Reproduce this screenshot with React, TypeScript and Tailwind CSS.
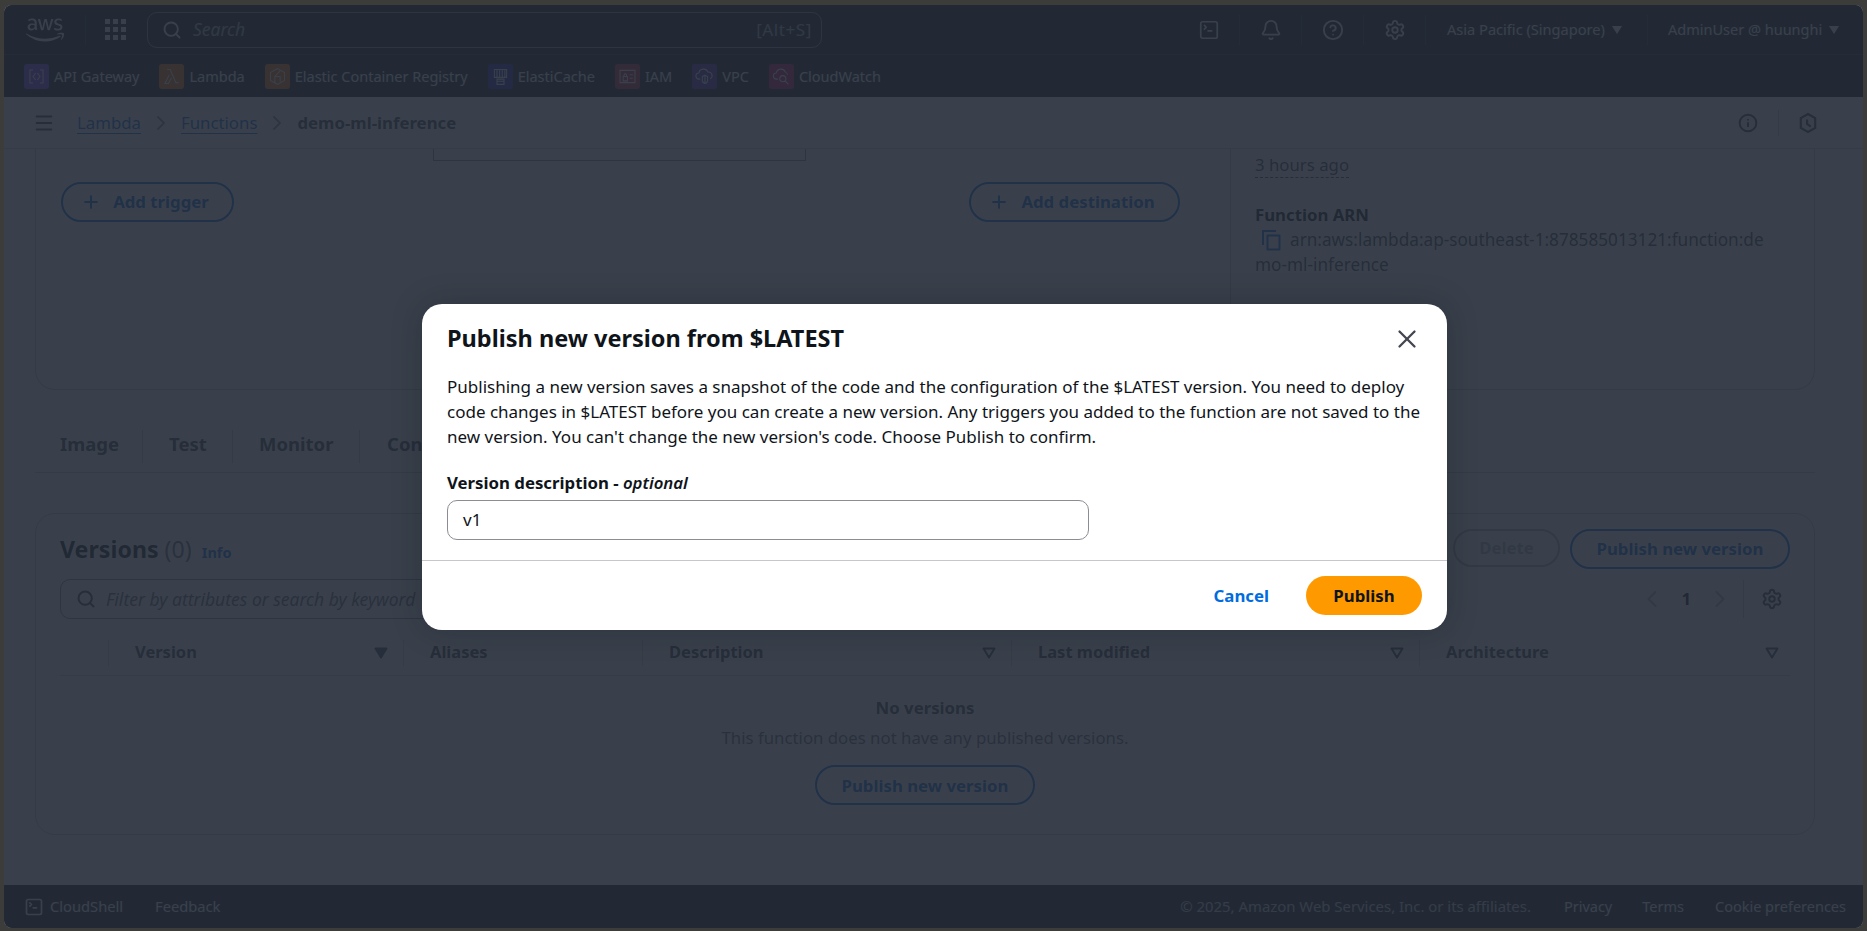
import React from 'react';
import { Bell, ChevronLeft, ChevronRight, CircleHelp, Info, Menu, Plus, Search, Settings, SquareTerminal, X } from 'lucide-react';
import { FaAws } from 'react-icons/fa';

const favorites = [
  {
    name: 'API Gateway',
    color: 'bg-[#7a3dfa]',
    glyph: <path d="M8 4.5H4.5v15H8M16 4.5h3.5v15H16M11 8l-3 4 3 4M13 8l3 4-3 4" />,
  },
  {
    name: 'Lambda',
    color: 'bg-[#ed7100]',
    glyph: <path d="M7 4h3.5L17 19h3M9.5 10 4.5 20h4l3.5-6.5" />,
  },
  {
    name: 'Elastic Container Registry',
    color: 'bg-[#ed7100]',
    glyph: <path d="M12 3l8 4.5v9L12 21l-8-4.5v-9zM9 19.5V12l6-6.5M15 18v-6l-6 0" />,
  },
  {
    name: 'ElastiCache',
    color: 'bg-[#2e27ad]',
    glyph: <path d="M5 4h14v9H5zM8 4v9M11 4v9M14 4v9M17 4v9M8 15h8v2.5H8zM8 17.5h8V21H8z" />,
  },
  {
    name: 'IAM',
    color: 'bg-[#c7293f]',
    glyph: <path d="M3.5 5h17v14h-17zM7 12h5v5H7zM8 12v-1.5a1.5 1.5 0 0 1 3 0V12M14.5 10h3.5M14.5 14h3.5" />,
  },
  {
    name: 'VPC',
    color: 'bg-[#5a30b5]',
    glyph: <path d="M7 15H6a3.5 3.5 0 0 1-.5-7 5.5 5.5 0 0 1 10.5-1 4 4 0 0 1 2.5 7.5M9.5 12l3-1.5 3 1.5v4.5c0 2-1.5 3-3 3.5-1.5-.5-3-1.5-3-3.5zM12.5 11v8" />,
  },
  {
    name: 'CloudWatch',
    color: 'bg-[#c7136a]',
    glyph: <path d="M8 15H6.5a3.5 3.5 0 0 1-.5-7 5.5 5.5 0 0 1 10.5-1 4 4 0 0 1 2.5 3M13.5 11a3.5 3.5 0 1 0 0 7 3.5 3.5 0 0 0 0-7zM16 17l4 4" />,
  },
];

const Caret = ({ className = '' }: { className?: string }) => (
  <svg viewBox="0 0 12 10" className={`w-[12px] h-[10px] fill-current ${className}`}>
    <path d="M1 1h10L6 9z" />
  </svg>
);

const SortIcon = ({ filled }: { filled?: boolean }) => (
  <svg viewBox="0 0 14 12" className="w-[14px] h-[12px]">
    <path d="M1.5 1.5h11L7 10.5z" fill={filled ? '#414d5c' : 'none'} stroke="#414d5c" strokeWidth="2" strokeLinejoin="round" />
  </svg>
);

const GridIcon = () => (
  <svg viewBox="0 0 21 21" className="w-[21px] h-[21px] fill-current">
    {[0, 8, 16].map((y) => [0, 8, 16].map((x) => <rect key={`${x}-${y}`} x={x} y={y} width="5" height="5" />))}
  </svg>
);

const Pill = ({ children, className = '' }: { children: React.ReactNode; className?: string }) => (
  <button className={`h-[40px] flex items-center justify-center rounded-full border-[2.5px] border-[#006ce0] text-[#006ce0] text-[16.8px] font-bold ${className}`}>
    {children}
  </button>
);

const Service = ({ item }: { item: (typeof favorites)[number] }) => (
  <div className="flex items-center gap-[5px]">
    <div className={`${item.color} w-[25px] h-[25px] rounded-[3px] flex items-center justify-center`}>
      <svg viewBox="0 0 24 24" className="w-[21px] h-[21px]" fill="none" stroke="white" strokeWidth="1.2">
        {item.glyph}
      </svg>
    </div>
    <span className="text-[14.5px] text-white whitespace-nowrap">{item.name}</span>
  </div>
);

const columns = [
  { label: 'Version', w: 'w-[295px]', filled: true },
  { label: 'Aliases', w: 'w-[239px]', none: true },
  { label: 'Description', w: 'w-[369px]' },
  { label: 'Last modified', w: 'w-[408px]' },
  { label: 'Architecture', w: 'w-[369px]' },
];

const NavIcon = ({ children }: { children: React.ReactNode }) => (
  <div className="w-[62px] h-[30px] flex items-center justify-center border-r border-[#2a3340]">{children}</div>
);

export default function App() {
  return (
    <div className="w-full h-screen bg-[#3c3c3a] pt-[5px] pl-[4px] pr-[4px] pb-[3px] overflow-hidden" style={{ fontFamily: '"Noto Sans", "Open Sans", sans-serif' }}>
      <div className="relative w-full h-full flex flex-col bg-white rounded-[8px] overflow-hidden text-[#0f141a]">
        {/* top nav */}
        <div className="bg-[#161d26] h-[50px] shrink-0 flex items-center text-white border-b border-[#2a3340]">
          <div className="w-[82px] pl-[22px] flex items-center border-r border-[#2a3340] h-[30px]">
            <FaAws className="w-[38px] h-[36px]" />
          </div>
          <div className="ml-[19px] w-[21px]"><GridIcon /></div>
          <div className="ml-[21px] w-[675px] h-[36px] rounded-[10px] border border-[#8c8c94] flex items-center pl-[14px] pr-[9px]">
            <Search className="w-[20px] h-[20px]" strokeWidth={2.2} />
            <span className="ml-[11px] italic text-[17.5px] text-[#b0b5bd]">Search</span>
            <span className="ml-auto text-[17px] tracking-[0.6px] text-[#b0b5bd]">[Alt+S]</span>
          </div>
          <div className="ml-[356px] flex items-center">
            <NavIcon><SquareTerminal className="w-[22px] h-[26px]" strokeWidth={1.8} /></NavIcon>
            <NavIcon><Bell className="w-[22px] h-[24px]" strokeWidth={2} /></NavIcon>
            <NavIcon><CircleHelp className="w-[22px] h-[22px]" strokeWidth={2} /></NavIcon>
            <NavIcon><Settings className="w-[22px] h-[22px]" strokeWidth={2} /></NavIcon>
          </div>
          <div className="w-[222px] h-[30px] pl-[21px] flex items-center gap-[6px] text-[14.6px] border-r border-[#2a3340]">
            <span>Asia Pacific (Singapore)</span>
            <Caret />
          </div>
          <div className="ml-[20px] flex items-center gap-[6px] text-[14.5px]">
            <span>AdminUser @ huunghi</span>
            <Caret />
          </div>
        </div>

        {/* favorites */}
        <div className="bg-[#161d26] h-[42px] shrink-0 flex items-center pl-[20px] pt-[1px] gap-[20px]">
          {favorites.map((f) => (
            <Service key={f.name} item={f} />
          ))}
        </div>

        {/* breadcrumbs */}
        <div className="h-[52px] shrink-0 flex items-center pl-[29px] pr-[46px] border-b border-[#d4d6dc] text-[16.8px]">
          <Menu className="w-[22px] h-[22px] text-[#424650]" strokeWidth={2.2} />
          <a className="ml-[22px] text-[#006ce0] underline underline-offset-4">Lambda</a>
          <ChevronRight className="mx-[8px] w-[24px] h-[24px] text-[#8c8c94]" strokeWidth={1.8} />
          <a className="text-[#006ce0] underline underline-offset-4">Functions</a>
          <ChevronRight className="mx-[8px] w-[24px] h-[24px] text-[#8c8c94]" strokeWidth={1.8} />
          <span className="font-bold text-[#424650]">demo-ml-inference</span>
          <div className="ml-auto flex items-center h-[30px]">
            <Info className="w-[20px] h-[20px] text-[#424650]" strokeWidth={2.4} />
            <div className="ml-[20px] mr-[20px] w-px h-[26px] bg-[#c6c6cd]" />
            <svg viewBox="0 0 20 24" className="w-[18px] h-[22px] text-[#424650]" fill="none" stroke="currentColor" strokeWidth="2.4">
              <path d="M10 2l8 4.5v11L10 22l-8-4.5v-11z" />
              <path d="M9 8v5l4 3" />
            </svg>
          </div>
        </div>

        {/* page */}
        <div className="flex-1 min-h-0 flex flex-col pl-[31px] pr-[48px]">
          <div className="h-[241px] shrink-0 flex border-x border-b border-[#c6c6cd] rounded-b-[20px]">
            <div className="w-[1194px] shrink-0 flex flex-col">
              <div className="ml-[397px] w-[373px] h-[12px] border-x border-b border-[#8c8c94]" />
              <div className="mt-[21px] pl-[25px] pr-[50px] flex justify-between">
                <Pill className="w-[173px] gap-[12px] pr-[5px]"><Plus className="w-[20px] h-[20px]" strokeWidth={2.5} />Add trigger</Pill>
                <Pill className="w-[211px] gap-[12px] pr-[5px]"><Plus className="w-[20px] h-[20px]" strokeWidth={2.5} />Add destination</Pill>
              </div>
            </div>
            <div className="flex-1 border-l border-[#c6c6cd] pl-[24px] text-[16.8px] leading-[25px] text-[#424650]">
              <div className="mt-[4px] inline-block border-b border-dashed border-[#424650] leading-[24px]">3 hours ago</div>
              <div className="mt-[24px] font-bold text-[#0f141a]">Function ARN</div>
              <div className="whitespace-nowrap text-[17.2px]">
                <svg viewBox="0 0 20 22" className="inline-block ml-[6px] mr-[9px] w-[20px] h-[22px] align-[-5px] text-[#006ce0]" fill="none" stroke="currentColor" strokeWidth="2">
                  <path d="M2 16V2h13" />
                  <rect x="6.5" y="6.5" width="12" height="14" />
                </svg>
                arn:aws:lambda:ap-southeast-1:878585013121:function:de
                <br />
                mo-ml-inference
              </div>
            </div>
          </div>

          {/* tabs */}
          <div className="mt-[40px] h-[43px] shrink-0 flex pl-[25px] pb-[9px] border-b border-[#c6c6cd] text-[18.5px] font-bold text-[#424650]">
            <span className="w-[83px] border-r border-[#c6c6cd]">Image</span>
            <span className="w-[90px] pl-[26px] border-r border-[#c6c6cd]">Test</span>
            <span className="w-[127px] pl-[26px] border-r border-[#c6c6cd]">Monitor</span>
            <span className="pl-[27px]">Configuration</span>
          </div>

          {/* versions */}
          <div className="mt-[40px] h-[322px] shrink-0 border border-[#c6c6cd] rounded-[20px] px-[24px] flex flex-col">
            <div className="mt-[16px] h-[38px] flex items-center justify-between">
              <div className="flex items-baseline">
                <span className="text-[23.2px] font-bold">Versions</span>
                <span className="ml-[6px] text-[23.2px] text-[#656871]">(0)</span>
                <span className="ml-[10px] text-[14.5px] font-bold text-[#006ce0]">Info</span>
              </div>
              <div className="flex gap-[10px]">
                <button className="w-[107px] h-[38px] rounded-full border-[2px] border-[#b4b4bb] text-[16.8px] font-bold text-[#b4b4bb]">Delete</button>
                <Pill className="w-[220px] h-[38px]">Publish new version</Pill>
              </div>
            </div>
            <div className="mt-[11px] h-[40px] flex items-center">
              <div className="w-[940px] h-[40px] rounded-[10px] border border-[#8c8c94] flex items-center pl-[15px]">
                <Search className="w-[20px] h-[20px] text-[#424650]" strokeWidth={2.4} />
                <span className="ml-[10px] italic text-[17.5px] text-[#656871]">Filter by attributes or search by keyword</span>
              </div>
              <div className="ml-auto flex items-center text-[#b4b4bb]">
                <ChevronLeft className="w-[28px] h-[28px]" strokeWidth={1.8} />
                <span className="mx-[15px] font-bold text-[#0f141a] text-[16.8px]">1</span>
                <ChevronRight className="w-[28px] h-[28px]" strokeWidth={1.8} />
                <div className="ml-[9px] mr-[17px] w-px h-[38px] bg-[#c6c6cd]" />
                <Settings className="w-[22px] h-[22px] text-[#424650] mr-[7px]" strokeWidth={2.2} />
              </div>
            </div>
            <div className="mt-[16px] h-[41px] flex pb-[5px] border-b border-[#d4d6dc] text-[16.5px] font-bold text-[#424650] items-center">
              <div className="w-[49px] h-[26px] border-r border-[#d4d6dc] shrink-0" />
              {columns.map((c) => (
                <div key={c.label} className={`${c.w} h-[26px] shrink-0 flex items-center justify-between pl-[26px] pr-[15px] border-r border-[#d4d6dc] last:border-r-0 last:w-[370px] last:pr-[11px]`}>
                  <span>{c.label}</span>
                  {!c.none && <SortIcon filled={c.filled} />}
                </div>
              ))}
            </div>
            <div className="flex flex-col items-center mt-[19px] text-[16.8px] leading-[25px]">
              <div className="font-bold text-[#424650]">No versions</div>
              <div className="mt-[5px] text-[#656871]">This function does not have any published versions.</div>
              <Pill className="mt-[15px] w-[220px]">Publish new version</Pill>
            </div>
          </div>
        </div>

        {/* footer */}
        <div className="bg-[#161d26] h-[43px] shrink-0 flex items-center pl-[20px] pr-[17px] text-white text-[14.5px]">
          <SquareTerminal className="w-[20px] h-[24px]" strokeWidth={2} />
          <span className="ml-[6px] text-[14.7px]">CloudShell</span>
          <span className="ml-[32px] text-[14.7px]">Feedback</span>
          <span className="ml-auto text-[14.9px] text-[#d1d5db]">© 2025, Amazon Web Services, Inc. or its affiliates.</span>
          <span className="ml-[33px]">Privacy</span>
          <span className="ml-[30px]">Terms</span>
          <span className="ml-[31px]">Cookie preferences</span>
        </div>

        {/* overlay + modal */}
        <div className="absolute inset-0 bg-[#232b37]/90 z-10" />
        <div className="absolute z-20 left-[418px] top-[299px] w-[1025px] h-[326px] bg-white rounded-[20px] shadow-[0_0_30px_rgba(15,20,26,0.25)] flex flex-col">
          <div className="flex-1 px-[25px] pt-[18px]">
            <div className="flex items-center justify-between">
              <h2 className="text-[23.5px] leading-[33px] font-bold text-[#0f141a]">Publish new version from $LATEST</h2>
              <X className="w-[30px] h-[30px] text-[#424650]" strokeWidth={1.8} />
            </div>
            <p className="mt-[19px] text-[17px] leading-[25px] text-[#0f141a]">
              Publishing a new version saves a snapshot of the code and the configuration of the $LATEST version. You need to deploy code changes in $LATEST before you can create a new version. Any triggers you added to the function are not saved to the new version. You can't change the new version's code. Choose Publish to confirm.
            </p>
            <div className="mt-[21px] text-[16.8px] leading-[25px] font-bold">Version description - <i className="font-semibold">optional</i></div>
            <div className="mt-[5px] w-[642px] h-[40px] rounded-[10px] border border-[#8c8c94] flex items-center pl-[15px] text-[17px]">v1</div>
          </div>
          <div className="h-[70px] border-t border-[#c6c6cd] flex items-center justify-end pr-[25px]">
            <button className="text-[16.8px] font-bold text-[#006ce0]">Cancel</button>
            <button className="ml-[37px] w-[116px] h-[39px] rounded-full bg-[#ff9900] text-[16.8px] font-bold text-[#0f141a]">Publish</button>
          </div>
        </div>
      </div>
    </div>
  );
}
